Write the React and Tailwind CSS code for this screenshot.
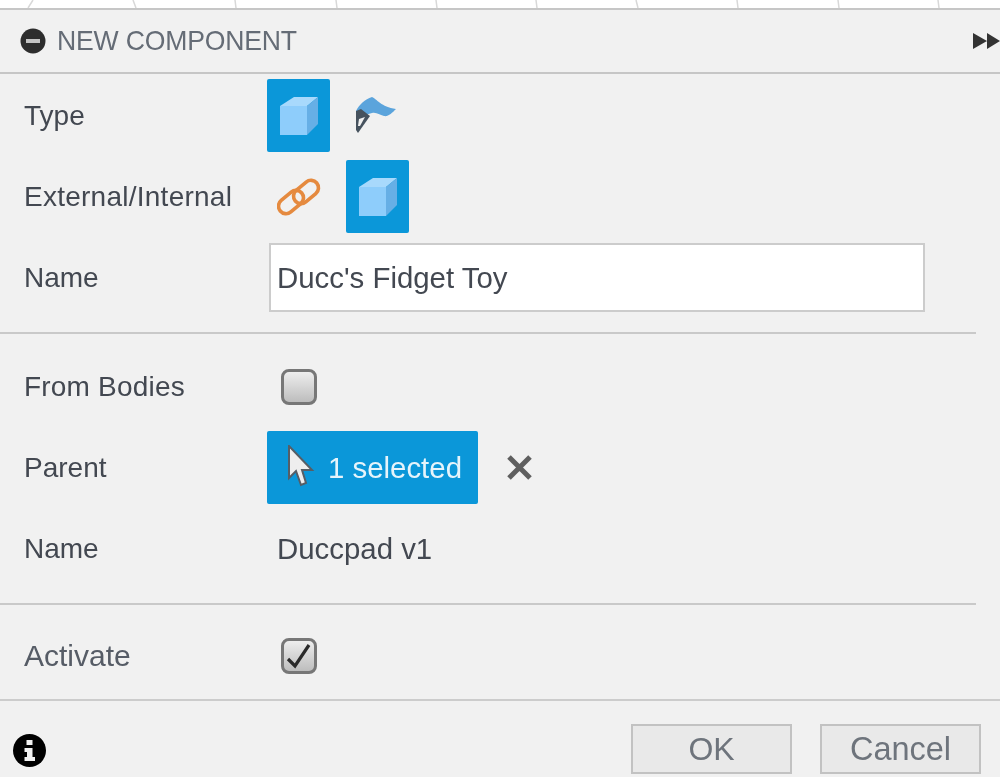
import React from "react";

function Cube() {
  return (
    <svg width="40" height="40" viewBox="0 0 40 40">
      <path d="M1 10 L15 1 L39 1 L28 10 Z" fill="#a8d9fc" />
      <path d="M1 10 L28 10 L28 39 L1 39 Z" fill="#8ecdfb" />
      <path d="M28 10 L39 1 L39 28 L28 39 Z" fill="#66afe6" />
    </svg>
  );
}

function CubeButton() {
  return (
    <div className="w-[63px] h-[73px] bg-[#0b97d9] rounded-[2px] flex items-center justify-center">
      <Cube />
    </div>
  );
}

function SurfaceIcon() {
  return (
    <svg width="44" height="38" viewBox="0 0 44 38">
      <path d="M1 14 C4 8 10 2 17 0 C22 2 26 10 41 12 C37 16 33 20 29 19 C24 18 22 15 17 16 C12 17 8 19 5 21 Z" fill="#5ba4dc" />
      <path d="M1 14 L6 12 L15 19 L3 36 L1 33 Z" fill="#46525e" />
      <path d="M4 22 L10 20 L5 29 L3 29 Z" fill="#f1f1f1" />
    </svg>
  );
}

function LinkIcon() {
  return (
    <svg width="44" height="38" viewBox="0 0 44 38" fill="none" stroke="#e58a3f" strokeWidth="3.6">
      <rect x="-14" y="-7.5" width="28" height="15" rx="7.5" transform="translate(14 24) rotate(-40)" />
      <rect x="-14" y="-7.5" width="28" height="15" rx="7.5" transform="translate(29 14) rotate(-40)" />
    </svg>
  );
}

function Checkbox({ checked }) {
  return (
    <div className="w-9 h-9 ml-[14px] rounded-lg border-[3px] border-[#777777] bg-gradient-to-b from-[#eeeeee] to-[#bdbdbd] flex items-center justify-center">
      {checked && (
        <svg width="26" height="28" viewBox="0 0 26 28" fill="none" stroke="#2a2a2a" strokeWidth="3.2">
          <path d="M2 17 L9 24 L23 3" />
        </svg>
      )}
    </div>
  );
}

function Row({ label, labelClass, children, className }) {
  return (
    <div className={`flex items-center ${className}`}>
      <div className={`w-[267px] pl-6 shrink-0 ${labelClass}`}>{label}</div>
      {children}
    </div>
  );
}

export default function App() {
  return (
    <div className="w-[1000px] h-[777px] overflow-hidden bg-[#f1f1f1] text-[28px] leading-none text-[#434851] font-['Liberation_Sans',Arial,sans-serif] blur-[0.7px]">
      {/* sliver of the canvas above the dialog */}
      <svg className="block" width="1000" height="8" viewBox="0 0 1000 8" fill="none" stroke="#d8d8d8" strokeWidth="1.5">
        <rect width="1000" height="8" fill="#ffffff" stroke="none" />
        <path d="M33 0 L28 8 M133 0 L136 8 M235 0 L236 8 M336 0 L337 8 M436 0 L437 8 M536 0 L537 8 M636 0 L638 8 M737 0 L738 8 M838 0 L839 8 M938 0 L939 8" />
      </svg>

      <header className="h-[66px] border-y-2 border-[#c6c6c6] flex items-center justify-between pl-5">
        <div className="flex items-center gap-[11px] text-[#656c76]">
          <svg width="26" height="26" viewBox="0 0 26 26">
            <circle cx="13" cy="13" r="12.5" fill="#2d2d2d" />
            <rect x="6" y="11" width="14" height="4" fill="#c4c4c4" />
          </svg>
          <span className="text-[28px] tracking-[-0.2px] scale-x-[0.95] origin-left">NEW COMPONENT</span>
        </div>
        <svg width="27" height="16" viewBox="0 0 27 16" fill="#333333">
          <path d="M0 0 L14 8 L0 16 Z M14 0 L27 8 L14 16 Z" />
        </svg>
      </header>

      <div className="pt-[5px]">
        <Row label="Type">
          <div className="flex items-center">
            <CubeButton />
            <div className="ml-[25px]"><SurfaceIcon /></div>
          </div>
        </Row>
        <Row label="External/Internal" labelClass="tracking-[0.25px]" className="mt-2">
          <div className="flex items-center">
            <div className="ml-[10px]"><LinkIcon /></div>
            <div className="ml-[25px]"><CubeButton /></div>
          </div>
        </Row>
        <Row label="Name" className="mt-[10px]">
          <div className="ml-[2px] w-[656px] h-[69px] bg-white border-2 border-[#cccccc] flex items-center pl-[6px] text-[29.4px]">
            Ducc's Fidget Toy
          </div>
        </Row>
      </div>

      <div className="mt-[20px] w-[976px] border-t-2 border-[#c9c9c9]" />

      <div className="mt-[12px]">
        <Row label="From Bodies" labelClass="tracking-[0.2px]" className="h-[81px]">
          <Checkbox />
        </Row>
        <Row label="Parent" className="h-[81px]">
          <div className="w-[211px] h-[73px] bg-[#0b97d9] rounded-[2px] flex items-center pl-5 text-[#e6f4fb]">
            <svg width="28" height="42" viewBox="0 0 28 42" className="-mt-[3px] shrink-0">
              <path d="M2 1 L2 33 L9 26 L14 40 L19 38 L15 25 L25 25 Z" fill="#eeeeee" stroke="#565e66" strokeWidth="2" />
            </svg>
            <span className="ml-[13px] text-[29.4px]">1 selected</span>
          </div>
          <svg width="25" height="25" viewBox="0 0 25 25" className="ml-[29px]" stroke="#5f5f5f" strokeWidth="5">
            <path d="M2 2 L23 23 M23 2 L2 23" />
          </svg>
        </Row>
        <Row label="Name" className="h-[81px]">
          <span className="ml-[10px] text-[29.4px]">Duccpad v1</span>
        </Row>
      </div>

      <div className="mt-[14px] w-[976px] border-t-2 border-[#c9c9c9]" />

      <Row label="Activate" labelClass="text-[30px] text-[#565c66]" className="h-[81px] mt-[10px]">
        <Checkbox checked />
      </Row>

      <div className="mt-[3px] border-t-2 border-[#cccccc]" />

      <footer className="flex items-center justify-between pl-[13px] pr-[19px] pt-[23px]">
        <svg width="33" height="33" viewBox="0 0 33 33" className="mt-[3px]">
          <circle cx="16.5" cy="16.5" r="16.5" fill="#000000" />
          <rect x="13.5" y="6" width="6" height="5" fill="#f1f1f1" />
          <path d="M11.5 14 H19.5 V23 H22 V27 H11.5 V23 H14 V18 H11.5 Z" fill="#f1f1f1" />
        </svg>
        <div className="flex gap-[28px] text-[#6e747c]">
          <div className="w-[161px] h-[50px] bg-[#e9e9e9] border-2 border-[#c2c2c2] flex items-center justify-center text-[32px]">OK</div>
          <div className="w-[161px] h-[50px] bg-[#e9e9e9] border-2 border-[#c2c2c2] flex items-center justify-center text-[32.5px]">Cancel</div>
        </div>
      </footer>
    </div>
  );
}
